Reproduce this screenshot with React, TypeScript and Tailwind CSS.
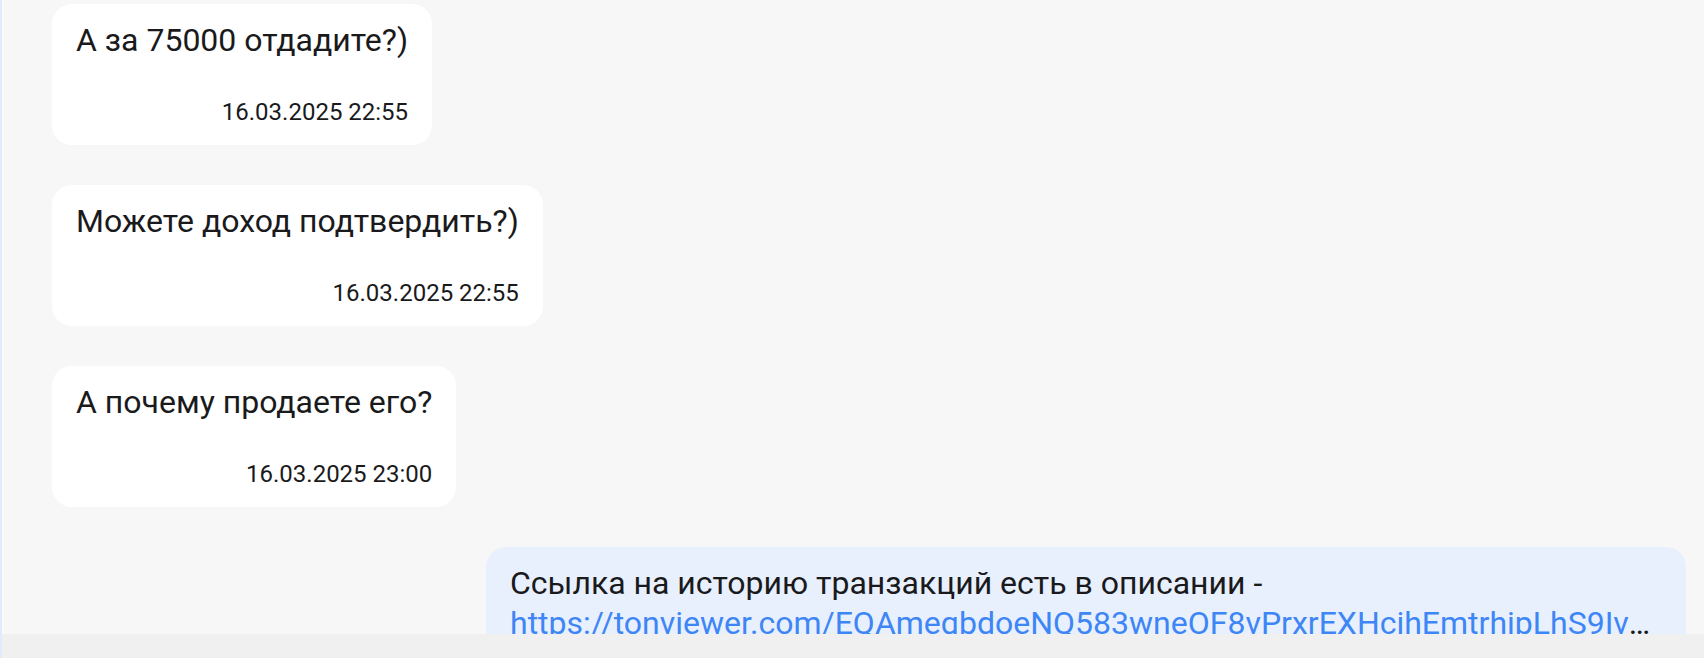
import React from "react";

function Incoming({ text, time }: { text: string; time: string }) {
  return (
    <div className="flex justify-start">
      <div className="bg-white rounded-[20px] pl-[24px] pr-[24px] pt-[16px] pb-[17px] flex flex-col">
        <div className="text-[32px] leading-[40px] text-[#1a1a1c]">{text}</div>
        <div className="mt-[36px] text-[24px] leading-[32px] text-[#1a1a1c] text-right">{time}</div>
      </div>
    </div>
  );
}

export default function App() {
  return (
    <div
      className="w-[1704px] h-[658px] overflow-hidden flex bg-[#f7f7f7]"
      style={{ fontFamily: "Roboto, 'Noto Sans', sans-serif" }}
    >
      <div className="w-[2px] shrink-0 bg-[#e3ebfa]" />
      <div className="flex-1 flex flex-col min-w-0">
        <div className="flex-1 min-h-0 overflow-hidden border-l border-[#fcfcfd] bg-[#f7f7f7] pl-[49px] pr-[18px] pt-[4px] flex flex-col gap-[40px]">
          <Incoming text="А за 75000 отдадите?)" time="16.03.2025 22:55" />
          <Incoming text="Можете доход подтвердить?)" time="16.03.2025 22:55" />
          <Incoming text="А почему продаете его?" time="16.03.2025 23:00" />
          <div className="flex justify-end">
            <div className="w-[1200px] bg-[#e8f0fe] rounded-[20px] px-[24px] pt-[16px] pb-[17px] flex flex-col">
              <div className="text-[32px] leading-[40px] text-[#1a1a1c]">
                Ссылка на историю транзакций есть в описании -
              </div>
              <div className="text-[32px] leading-[40px] text-[#1a1a1c] truncate">
                <a className="text-[#3e86f5]">
                  https://tonviewer.com/EQAmeqbdoeNQ583wneOF8vPrxrEXHcihEmtrhipLhS9IvXkR2w
                </a>
              </div>
              <div className="mt-[36px] text-[24px] leading-[32px] text-[#1a1a1c] text-right">
                16.03.2025 23:05
              </div>
            </div>
          </div>
        </div>
        <div className="h-[24px] shrink-0 bg-[#f0f0f0]" />
      </div>
    </div>
  );
}
